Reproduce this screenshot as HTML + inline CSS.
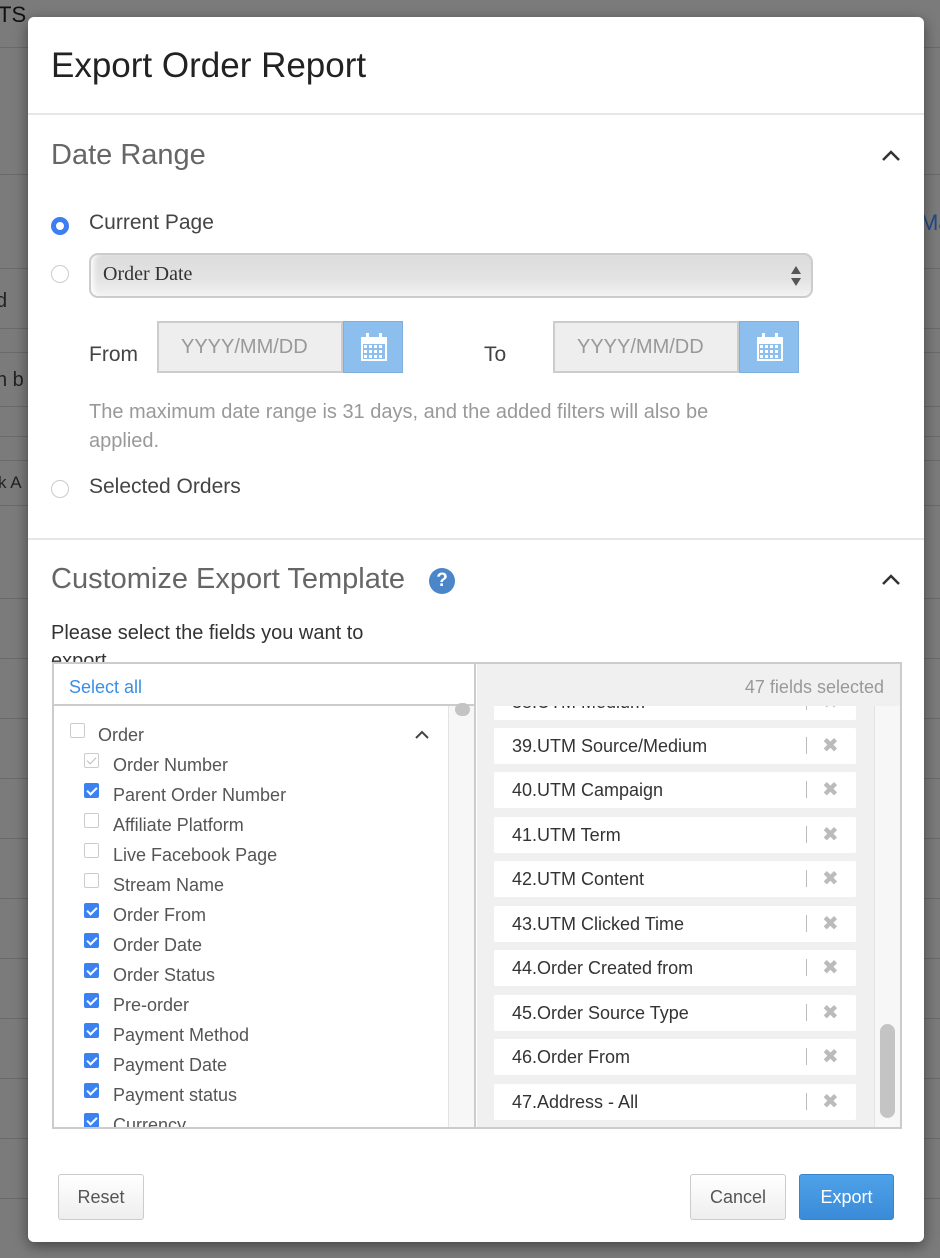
<!DOCTYPE html>
<html><head><meta charset="utf-8"><style>
*{box-sizing:border-box;margin:0;padding:0}
body{width:940px;height:1258px;background:#7b7b7b;font-family:"Liberation Sans","DejaVu Sans",sans-serif;position:relative;overflow:hidden}
.a{position:absolute}
.line{position:absolute;left:0;width:940px;height:1px;background:#6a6a6a}
.modal{position:absolute;left:28px;top:17px;width:896px;height:1225px;background:#fff;border-radius:6px;box-shadow:0 4px 14px rgba(0,0,0,.45);overflow:hidden}
.t{position:absolute;white-space:nowrap;line-height:1}
.radio{position:absolute;width:18px;height:18px;border-radius:50%;border:1px solid #ccc;background:#fff}
.radio.on{border:5px solid #3d7ff0}
.inp{position:absolute;height:52px;border:2px solid #ccc;background:#eee;color:#999;font-size:20px;line-height:48px;padding-left:22px}
.cal{position:absolute;width:60px;height:52px;background:#8cbfed;border:1px solid #7fb0dd}
.cb{position:absolute;width:15px;height:15px;border:1px solid #ccc;border-radius:2px;background:#fff}
.cb.on{background:#3b82f0;border-color:#3b82f0}
.cb.on::after{content:"";position:absolute;left:4px;top:1px;width:4px;height:8px;border:solid #fff;border-width:0 2px 2px 0;transform:rotate(45deg)}
.cb.dis::after{content:"";position:absolute;left:4px;top:1px;width:4px;height:8px;border:solid #bbb;border-width:0 1px 1px 0;transform:rotate(45deg)}
.li{position:absolute;left:112px;font-size:18px;color:#555;white-space:nowrap;line-height:1}
.item{position:absolute;left:17px;width:362px;height:36px;background:#fff;border-radius:2px;font-size:18px;color:#333;line-height:36px;padding-left:18px}
.item .bar{position:absolute;left:312px;top:9px;width:1px;height:17px;background:#bbb}
.item .x{position:absolute;left:328px;top:0;color:#bbb;font-size:20px;font-weight:bold}
.btn{position:absolute;height:46px;border:1px solid #ccc;border-radius:3px;background:linear-gradient(#fff,#eee);font-size:18px;color:#555;text-align:center;line-height:44px}
</style></head><body>
<div class="line" style="top:47px"></div><div class="line" style="top:174px"></div><div class="line" style="top:268px"></div><div class="line" style="top:328px"></div><div class="line" style="top:352px"></div><div class="line" style="top:406px"></div><div class="line" style="top:436px"></div><div class="line" style="top:460px"></div><div class="line" style="top:505px"></div><div class="line" style="top:598px"></div><div class="line" style="top:658px"></div><div class="line" style="top:718px"></div><div class="line" style="top:778px"></div><div class="line" style="top:838px"></div><div class="line" style="top:898px"></div><div class="line" style="top:958px"></div><div class="line" style="top:1018px"></div><div class="line" style="top:1078px"></div><div class="line" style="top:1138px"></div><div class="line" style="top:1198px"></div>
<div class="t" style="left:-2px;top:4px;font-size:22px;color:#111">TS</div>
<div class="t" style="left:-4px;top:291px;font-size:20px;color:#222">d</div>
<div class="t" style="left:-4px;top:370px;font-size:20px;color:#222">n b</div>
<div class="t" style="left:-2px;top:474px;font-size:17px;color:#222">k A</div>
<div class="t" style="left:920px;top:212px;font-size:22px;color:#1d4a8a">Ma</div>

<div class="modal">
 <div class="t" style="left:23px;top:31px;font-size:35px;color:#222">Export Order Report</div>
 <div class="a" style="left:0;top:96px;width:896px;height:2px;background:#e6e6e6"></div>
 <div class="t" style="left:23px;top:124px;font-size:29px;color:#666">Date Range</div>
 <svg class="a" style="left:853px;top:132px" width="20" height="14"><path d="M2 11L10 3L18 11" stroke="#333" stroke-width="2.5" fill="none"/></svg>
 <div class="radio on" style="left:23px;top:200px"></div>
 <div class="t" style="left:61px;top:195px;font-size:21px;color:#444">Current Page</div>
 <div class="radio" style="left:23px;top:248px"></div>
 <div class="a" style="left:61px;top:236px;width:724px;height:45px;border:2px solid #ccc;border-radius:9px;background:linear-gradient(#dcdcdc,#e3e3e3 60%,#f2f2f2);box-shadow:inset 6px 0 6px -3px rgba(255,255,255,.9)"></div>
 <div class="t" style="left:75px;top:247px;font-size:20px;color:#333;font-family:'Liberation Serif',serif">Order Date</div>
 <svg class="a" style="left:762px;top:248px" width="12" height="22"><path d="M1 9L6 1L11 9Z M1 13L6 21L11 13Z" fill="#555"/></svg>
 <div class="t" style="left:61px;top:327px;font-size:21px;color:#444">From</div>
 <div class="inp" style="left:129px;top:304px;width:186px">YYYY/MM/DD</div>
 <div class="cal" style="left:315px;top:304px"><svg style="position:absolute;left:17px;top:11px" width="26" height="28"><rect x="0" y="4" width="26" height="24" fill="#fff"/><rect x="5" y="0" width="3" height="6" fill="#fff"/><rect x="18" y="0" width="3" height="6" fill="#fff"/><g fill="#8cbfed"><rect x="2" y="11" width="22" height="15"/></g><g fill="#fff"><rect x="3" y="12" width="3" height="3"/><rect x="8" y="12" width="3" height="3"/><rect x="13" y="12" width="3" height="3"/><rect x="18" y="12" width="3" height="3"/><rect x="3" y="17" width="3" height="3"/><rect x="8" y="17" width="3" height="3"/><rect x="13" y="17" width="3" height="3"/><rect x="18" y="17" width="3" height="3"/><rect x="3" y="22" width="3" height="3"/><rect x="8" y="22" width="3" height="3"/><rect x="13" y="22" width="3" height="3"/><rect x="18" y="22" width="3" height="3"/></g></svg></div>
 <div class="t" style="left:456px;top:327px;font-size:21px;color:#444">To</div>
 <div class="inp" style="left:525px;top:304px;width:186px">YYYY/MM/DD</div>
 <div class="cal" style="left:711px;top:304px"><svg style="position:absolute;left:17px;top:11px" width="26" height="28"><rect x="0" y="4" width="26" height="24" fill="#fff"/><rect x="5" y="0" width="3" height="6" fill="#fff"/><rect x="18" y="0" width="3" height="6" fill="#fff"/><g fill="#8cbfed"><rect x="2" y="11" width="22" height="15"/></g><g fill="#fff"><rect x="3" y="12" width="3" height="3"/><rect x="8" y="12" width="3" height="3"/><rect x="13" y="12" width="3" height="3"/><rect x="18" y="12" width="3" height="3"/><rect x="3" y="17" width="3" height="3"/><rect x="8" y="17" width="3" height="3"/><rect x="13" y="17" width="3" height="3"/><rect x="18" y="17" width="3" height="3"/><rect x="3" y="22" width="3" height="3"/><rect x="8" y="22" width="3" height="3"/><rect x="13" y="22" width="3" height="3"/><rect x="18" y="22" width="3" height="3"/></g></svg></div>
 <div class="t" style="left:61px;top:385px;font-size:20px;color:#999">The maximum date range is 31 days, and the added filters will also be</div>
 <div class="t" style="left:61px;top:414px;font-size:20px;color:#999">applied.</div>
 <div class="radio" style="left:23px;top:463px"></div>
 <div class="t" style="left:61px;top:459px;font-size:21px;color:#444">Selected Orders</div>
 <div class="a" style="left:0;top:521px;width:896px;height:2px;background:#e6e6e6"></div>
 <div class="t" style="left:23px;top:548px;font-size:29px;color:#666">Customize Export Template</div>
 <div class="a" style="left:401px;top:551px;width:26px;height:26px;border-radius:50%;background:#4a86c8;color:#fff;font-weight:bold;font-size:19px;text-align:center;line-height:26px">?</div>
 <svg class="a" style="left:853px;top:556px" width="20" height="14"><path d="M2 11L10 3L18 11" stroke="#333" stroke-width="2.5" fill="none"/></svg>
 <div class="t" style="left:23px;top:606px;font-size:20px;color:#333">Please select the fields you want to</div>
 <div class="t" style="left:23px;top:634px;font-size:20px;color:#333">export</div>

 <div class="a" style="left:24px;top:645px;width:850px;height:467px;border:2px solid #ccc;background:#fff;overflow:hidden">
  <div class="a" style="left:0;top:0;width:422px;height:42px;border-bottom:2px solid #ccc;border-right:2px solid #ccc"></div>
  <div class="t" style="left:15px;top:14px;font-size:18px;color:#3a8ee6">Select all</div>
  <div class="a" style="left:394px;top:42px;width:28px;height:430px;background:#f7f7f7;border-left:1px solid #e3e3e3;border-right:2px solid #ccc"></div>
  <div class="a" style="left:401px;top:39px;width:15px;height:13px;border-radius:7px;background:#c4c4c4"></div>
  <div class="cb" style="left:16px;top:59px"></div>
  <div class="t" style="left:44px;top:62px;font-size:18px;color:#555">Order</div>
  <svg class="a" style="left:361px;top:66px" width="14" height="10"><path d="M1 8L7 2L13 8" stroke="#444" stroke-width="2" fill="none"/></svg>
  <div class="cb dis" style="left:30px;top:89px"></div><div class="li" style="left:59px;top:92px">Order Number</div>
  <div class="cb on" style="left:30px;top:119px"></div><div class="li" style="left:59px;top:122px">Parent Order Number</div>
  <div class="cb" style="left:30px;top:149px"></div><div class="li" style="left:59px;top:152px">Affiliate Platform</div>
  <div class="cb" style="left:30px;top:179px"></div><div class="li" style="left:59px;top:182px">Live Facebook Page</div>
  <div class="cb" style="left:30px;top:209px"></div><div class="li" style="left:59px;top:212px">Stream Name</div>
  <div class="cb on" style="left:30px;top:239px"></div><div class="li" style="left:59px;top:242px">Order From</div>
  <div class="cb on" style="left:30px;top:269px"></div><div class="li" style="left:59px;top:272px">Order Date</div>
  <div class="cb on" style="left:30px;top:299px"></div><div class="li" style="left:59px;top:302px">Order Status</div>
  <div class="cb on" style="left:30px;top:329px"></div><div class="li" style="left:59px;top:332px">Pre-order</div>
  <div class="cb on" style="left:30px;top:359px"></div><div class="li" style="left:59px;top:362px">Payment Method</div>
  <div class="cb on" style="left:30px;top:389px"></div><div class="li" style="left:59px;top:392px">Payment Date</div>
  <div class="cb on" style="left:30px;top:419px"></div><div class="li" style="left:59px;top:422px">Payment status</div>
  <div class="cb on" style="left:30px;top:449px"></div><div class="li" style="left:59px;top:452px">Currency</div>

  <div class="a" style="left:423px;top:0;width:425px;height:467px;background:#f0f0f0;overflow:hidden">
   <div class="t" style="right:18px;top:14px;font-size:18px;color:#999">47 fields selected</div>
   <div class="a" style="left:0;top:42px;width:425px;height:425px;overflow:hidden">
    <div class="item" style="top:-22px">38.UTM Medium<span class="bar"></span><span class="x">✖</span></div>
    <div class="item" style="top:22px">39.UTM Source/Medium<span class="bar"></span><span class="x">✖</span></div>
    <div class="item" style="top:66px">40.UTM Campaign<span class="bar"></span><span class="x">✖</span></div>
    <div class="item" style="top:111px">41.UTM Term<span class="bar"></span><span class="x">✖</span></div>
    <div class="item" style="top:155px">42.UTM Content<span class="bar"></span><span class="x">✖</span></div>
    <div class="item" style="top:200px">43.UTM Clicked Time<span class="bar"></span><span class="x">✖</span></div>
    <div class="item" style="top:244px">44.Order Created from<span class="bar"></span><span class="x">✖</span></div>
    <div class="item" style="top:289px">45.Order Source Type<span class="bar"></span><span class="x">✖</span></div>
    <div class="item" style="top:333px">46.Order From<span class="bar"></span><span class="x">✖</span></div>
    <div class="item" style="top:378px">47.Address - All<span class="bar"></span><span class="x">✖</span></div>
    <div class="a" style="left:397px;top:0;width:28px;height:425px;background:#f7f7f7;border-left:1px solid #e3e3e3"></div>
    <div class="a" style="left:403px;top:318px;width:15px;height:94px;border-radius:8px;background:#c4c4c4"></div>
   </div>
  </div>
 </div>

 <div class="btn" style="left:30px;top:1157px;width:86px">Reset</div>
 <div class="btn" style="left:662px;top:1157px;width:96px">Cancel</div>
 <div class="btn" style="left:771px;top:1157px;width:95px;background:linear-gradient(#4ea2e8,#3a8bd8);border-color:#3a84cc;color:#fff">Export</div>
</div>
</body></html>
